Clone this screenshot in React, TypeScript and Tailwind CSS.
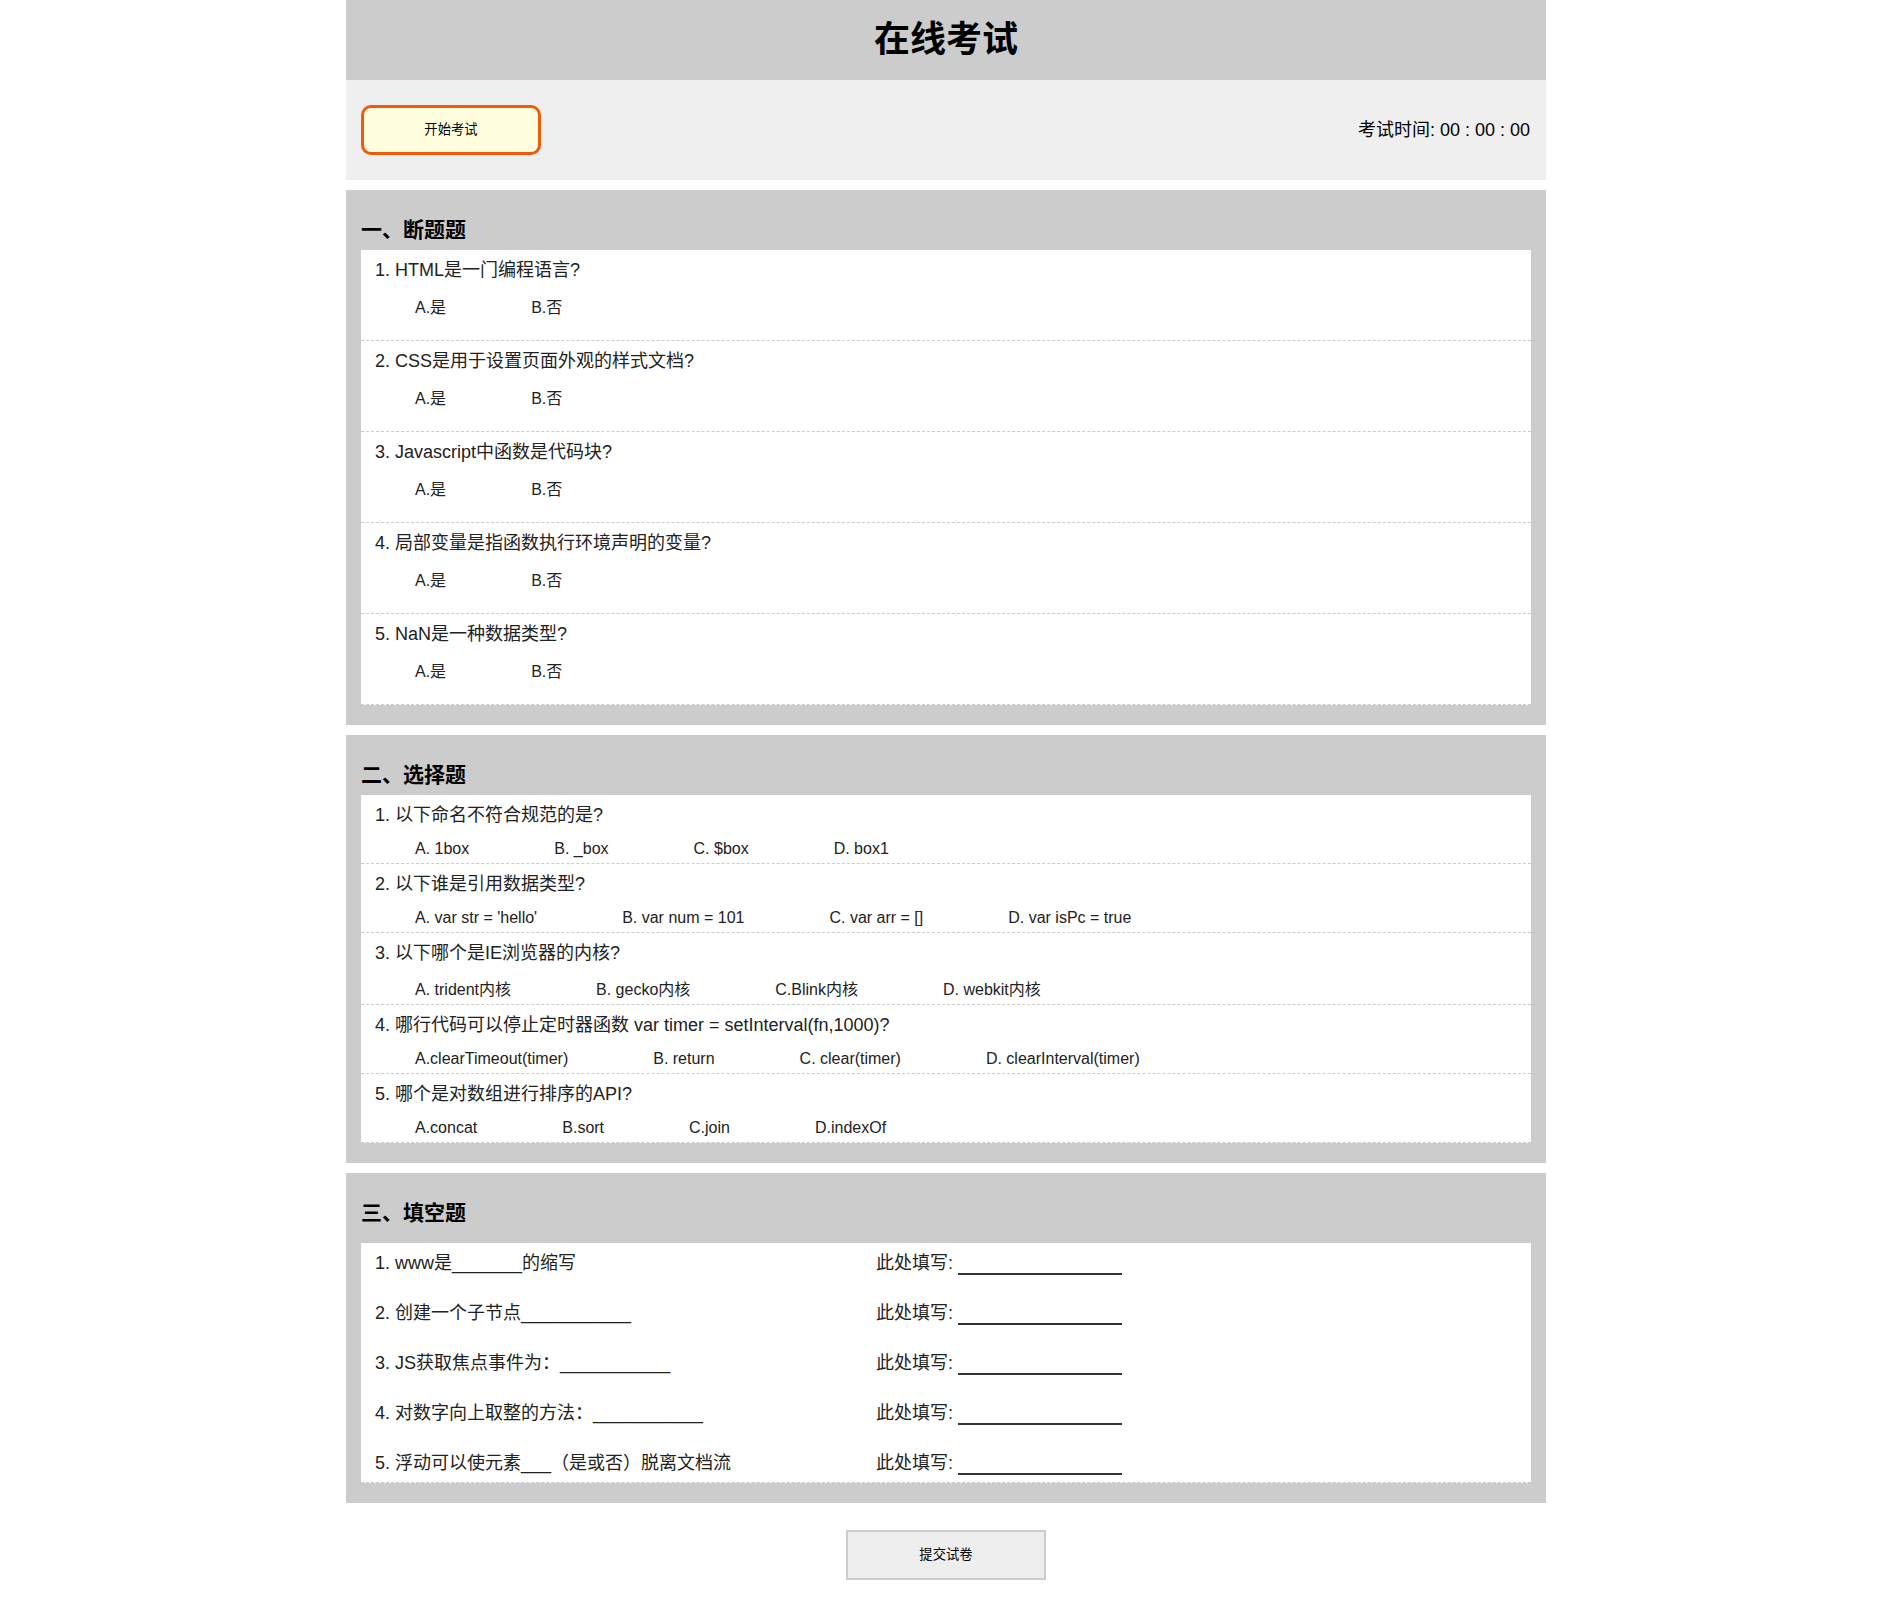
import React from "react";

const judgeList = [
  "1. HTML是一门编程语言?",
  "2. CSS是用于设置页面外观的样式文档?",
  "3. Javascript中函数是代码块?",
  "4. 局部变量是指函数执行环境声明的变量?",
  "5. NaN是一种数据类型?",
];

const choiceList = [
  { q: "1. 以下命名不符合规范的是?", opts: ["A. 1box", "B. _box", "C. $box", "D. box1"] },
  { q: "2. 以下谁是引用数据类型?", opts: ["A. var str = 'hello'", "B. var num = 101", "C. var arr = []", "D. var isPc = true"] },
  { q: "3. 以下哪个是IE浏览器的内核?", opts: ["A. trident内核", "B. gecko内核", "C.Blink内核", "D. webkit内核"], tall: true },
  { q: "4. 哪行代码可以停止定时器函数 var timer = setInterval(fn,1000)?", opts: ["A.clearTimeout(timer)", "B. return", "C. clear(timer)", "D. clearInterval(timer)"] },
  { q: "5. 哪个是对数组进行排序的API?", opts: ["A.concat", "B.sort", "C.join", "D.indexOf"] },
];

const fillList = [
  "1. www是_______的缩写",
  "2. 创建一个子节点___________",
  "3. JS获取焦点事件为：___________",
  "4. 对数字向上取整的方法：___________",
  "5. 浮动可以使元素___（是或否）脱离文档流",
];

function SectionTitle({ children }: { children: React.ReactNode }) {
  return <h2 className="h-[24px] leading-[24px] text-[21px] font-bold text-black">{children}</h2>;
}

export default function App() {
  return (
    <div className="min-h-screen bg-white font-['Liberation_Sans','Noto_Sans_CJK_SC',sans-serif] text-[#222]">
      <div className="w-[1200px] mx-auto">
        {/* header */}
        <div className="h-[80px] bg-[#cccccc] flex items-center justify-center">
          <h1 className="text-[36px] font-bold text-black leading-none">在线考试</h1>
        </div>

        {/* toolbar */}
        <div className="h-[100px] bg-[#efefef] flex items-center justify-between pl-[15px] pr-[16px]">
          <button className="w-[180px] h-[50px] border-[3px] border-[#f25a0a] rounded-[10px] bg-[#ffffe0] text-[13.33px] text-black">
            开始考试
          </button>
          <div className="text-[18px] text-black">考试时间: 00 : 00 : 00</div>
        </div>

        {/* 判断题 */}
        <div className="mt-[10px] bg-[#cccccc] px-[15px] pt-[28px] pb-[20px]">
          <SectionTitle>一、断题题</SectionTitle>
          <ul className="mt-[8px] bg-white">
            {judgeList.map((q) => (
              <li key={q} className="px-[14px] pt-[6px] pb-[20px] border-b border-dashed border-[#cccccc]">
                <div className="text-[18px] leading-[28px]">{q}</div>
                <div className="mt-[12px] pl-[40px] flex gap-[85px] text-[16px] leading-[24px]">
                  <span>A.是</span>
                  <span>B.否</span>
                </div>
              </li>
            ))}
          </ul>
        </div>

        {/* 选择题 */}
        <div className="mt-[10px] bg-[#cccccc] px-[15px] pt-[28px] pb-[20px]">
          <SectionTitle>二、选择题</SectionTitle>
          <ul className="mt-[8px] bg-white">
            {choiceList.map((item) => (
              <li key={item.q} className="px-[14px] pt-[6px] pb-[2px] border-b border-dashed border-[#cccccc]">
                <div className="text-[18px] leading-[28px]">{item.q}</div>
                <div className={`${item.tall ? "mt-[11px]" : "mt-[8px]"} pl-[40px] flex gap-[85px] text-[16px] leading-[24px]`}>
                  {item.opts.map((o) => (
                    <span key={o} className="whitespace-pre">{o}</span>
                  ))}
                </div>
              </li>
            ))}
          </ul>
        </div>

        {/* 填空题 */}
        <div className="mt-[10px] bg-[#cccccc] px-[15px] pt-[28px] pb-[20px]">
          <SectionTitle>三、填空题</SectionTitle>
          <div className="mt-[18px] bg-white px-[14px] pt-[1px] border-b border-dashed border-[#cccccc] flex flex-col gap-[12px]">
            {fillList.map((q) => (
              <div key={q} className="h-[38px] flex items-center text-[18px]">
                <span className="w-[501px] shrink-0">{q}</span>
                <span>此处填写:</span>
                <span className="ml-[5px] w-[164px] h-[24px] border-b-2 border-[#333333]" />
              </div>
            ))}
          </div>
        </div>

        <div className="mt-[27px] mb-[22px] flex justify-center">
          <button className="w-[200px] h-[50px] border-2 border-[#cccccc] bg-[#eeeeee] text-[13.33px] text-black">
            提交试卷
          </button>
        </div>
      </div>
    </div>
  );
}
